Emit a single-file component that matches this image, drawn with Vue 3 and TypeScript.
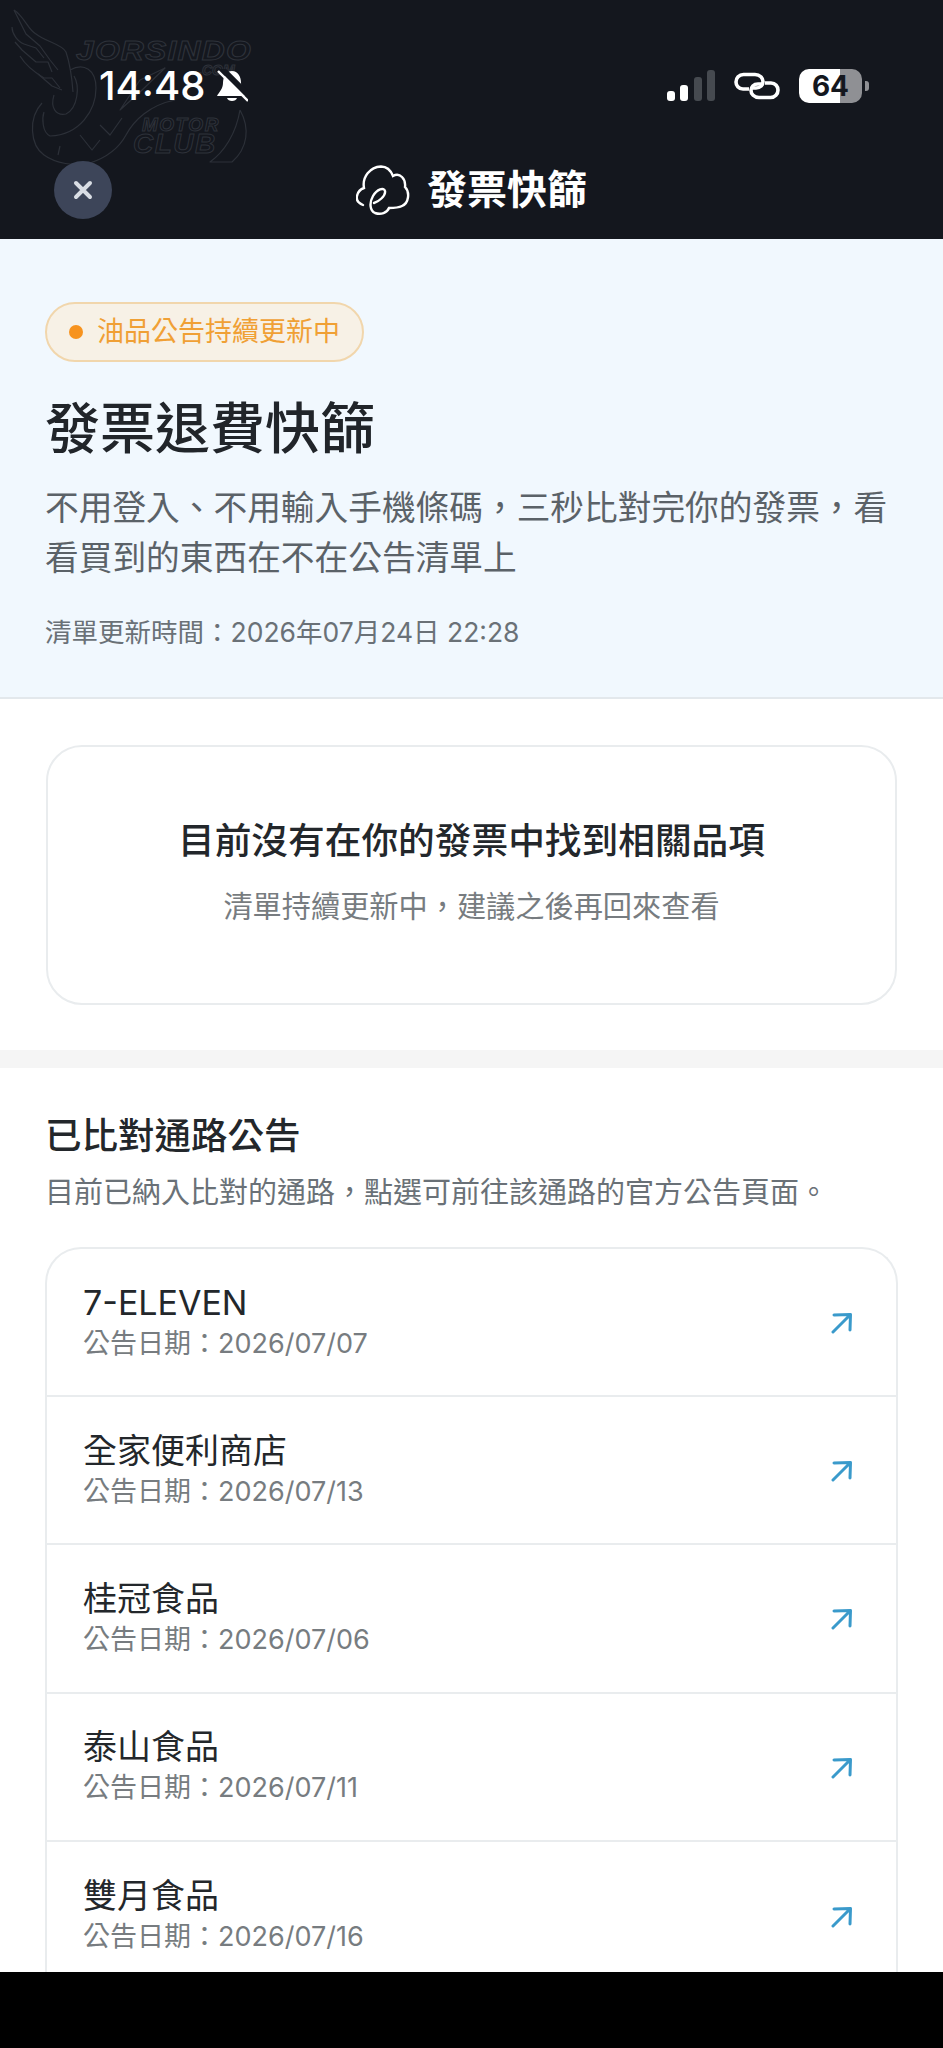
<template>
  <div class="page">
    <div class="screen">
      <header class="header">
        <div class="watermark">
          <svg class="wing" width="260" height="170" viewBox="0 0 260 170" fill="none" stroke="#2c3038" stroke-width="1.200" stroke-linejoin="round">
            <path d="M14 10 C24 16 28 30 36 34 C46 42 62 44 66 52 C70 64 72 78 73 92" />
            <path d="M14 10 L26 34 L40 46 L50 60 L58 70" />
            <path d="M12 27 C12 34 18 42 24 44 L36 48 L44 58" />
            <path d="M15 42 L22 50 L36 62 L48 62 L52 72" />
            <path d="M20 56 C26 66 34 72 44 78 L52 78 L60 88" />
            <path d="M38 74 L52 86 L62 90" />
            <path d="M70 70 C84 62 96 70 96 88 C96 110 80 135 50 136 C42 132 42 118 44 112" />
            <path d="M54 95 C50 108 56 116 66 114 C78 108 80 86 74 76" />
            <path d="M42 103 C28 118 30 145 44 155 C55 163 75 167 90 163 C105 158 118 150 126 135 C134 120 150 105 175 100" />
            <path d="M58 155 L60 146 M80 135 L92 150 L100 140 M100 125 L110 135 L122 118" />
            <path d="M165 68 L140 80 L120 110 L140 92 Z" />
            <path d="M240 110 C250 128 248 148 232 162 L210 162 C224 152 236 134 240 110" />
          </svg>
          <span class="wm-text wm-brand">JORSINDO</span>
          <span class="wm-text wm-com">.COM</span>
          <span class="wm-text wm-motor">MOTOR</span>
          <span class="wm-text wm-club">CLUB</span>
        </div>

        <div class="status-bar">
          <div class="status-left">
            <span class="time">14:48</span>
            <svg width="32" height="34" viewBox="0 0 32 34">
              <path d="M16 2 C10 2 7 8 7 14 C7 20 3 23 1 27 L31 27 C29 23 25 20 25 14 C25 8 22 2 16 2 Z" fill="#fff" />
              <path d="M11 29 C12 33 20 33 21 29 Z" fill="#fff" />
              <path d="M5 -1 L36 30" stroke="#14171e" stroke-width="6" />
              <path d="M2 2 L32 32" stroke="#fff" stroke-width="2.400" />
            </svg>
          </div>
          <div class="status-right">
            <div class="signal">
              <i class="bar on b1"></i>
              <i class="bar on b2"></i>
              <i class="bar b3"></i>
              <i class="bar b4"></i>
            </div>
            <svg width="46" height="28" viewBox="0 0 46 28" fill="none" stroke="#fff" stroke-width="3.600">
              <path d="M15 17 L9 17 C4.500 17 2 13.500 2 10 C2 6 5 2.500 9.500 2.500 L21 2.500 C26 2.500 29 6 29 9.500 C29 13 26.500 16 22 16 L19 16" />
              <path d="M31 11 L37 11 C41.500 11 44 14.500 44 18 C44 22 41 25.500 36.500 25.500 L25 25.500 C20 25.500 17 22 17 18.500 C17 15 19.500 12 24 12 L27 12" />
            </svg>
            <div class="battery">
              <div class="cell"><span>64</span></div>
              <i class="nub"></i>
            </div>
          </div>
        </div>

        <div class="nav">
          <button class="close" type="button">
            <svg width="20" height="20" viewBox="0 0 20 20" stroke="#d9dde4" stroke-width="4" stroke-linecap="round">
              <path d="M3 3 L17 17 M17 3 L3 17" />
            </svg>
          </button>
          <div class="brand">
            <svg width="54" height="50" viewBox="0 0 54 50" fill="none" stroke="#fff" stroke-width="2.400" stroke-linecap="round">
              <path d="M7 40 C2 38 0 35 1 31 C2 26 5 24 8 23 C6 12 14 2 25 1.500 C31 1.500 35 6 37 11 C44 7 50 14 49 22 C54 27 53 38 46 41 C42 43 37 43 33 43" />
              <path d="M18 38 C22 37 30 31 29 26 C28 22 21 24 17 31 C13 38 14 46 19 48 C25 50 31 48 33 43" />
            </svg>
            <span class="brand-name">發票快篩</span>
          </div>
          <div></div>
        </div>
      </header>

      <section class="hero">
        <div class="badge"><i class="dot"></i><span>油品公告持續更新中</span></div>
        <h1 class="hero-title">發票退費快篩</h1>
        <p class="hero-desc">不用登入、不用輸入手機條碼，三秒比對完你的發票，看看買到的東西在不在公告清單上</p>
        <p class="hero-time">清單更新時間：2026年07月24日 22:28</p>
      </section>

      <section class="result">
        <div class="result-card">
          <h2>目前沒有在你的發票中找到相關品項</h2>
          <p>清單持續更新中，建議之後再回來查看</p>
        </div>
      </section>

      <section class="channels">
        <h2 class="channels-title">已比對通路公告</h2>
        <p class="channels-sub">目前已納入比對的通路，點選可前往該通路的官方公告頁面。</p>
        <ul class="list">
          <li v-for="item in items" :key="item.name" class="row">
            <div class="row-text">
              <span class="row-name">{{ item.name }}</span>
              <span class="row-date">公告日期：{{ item.date }}</span>
            </div>
            <svg class="arrow" width="22" height="22" viewBox="0 0 22 22" fill="none" stroke="#3a9acb" stroke-width="3" stroke-linecap="round" stroke-linejoin="round">
              <path d="M2 20 L19 3 M3 3 L19.500 2.500 L19 18" />
            </svg>
          </li>
        </ul>
      </section>
    </div>
    <div class="black-bar"></div>
  </div>
</template>

<script setup lang="ts">
interface Channel {
  name: string;
  date: string;
}

const items: Channel[] = [
  { name: "7-ELEVEN", date: "2026/07/07" },
  { name: "全家便利商店", date: "2026/07/13" },
  { name: "桂冠食品", date: "2026/07/06" },
  { name: "泰山食品", date: "2026/07/11" },
  { name: "雙月食品", date: "2026/07/16" },
];
</script>

<style>
html,
body {
  margin: 0;
  background: #000;
}
</style>

<style scoped>
.page {
  width: 943px;
  height: 2048px;
  display: flex;
  flex-direction: column;
  overflow: hidden;
  font-family: Inter, "Noto Sans CJK TC", sans-serif;
}

.screen {
  height: 1972px;
  overflow: hidden;
  background: #fff;
}

.black-bar {
  flex: 1;
  background: #000;
}

.header {
  position: relative;
  height: 239px;
  box-sizing: border-box;
  background: #14171e;
  padding-top: 64px;
}

.watermark {
  position: absolute;
  left: 0;
  top: 0;
  width: 260px;
  height: 170px;
}

.wing {
  position: absolute;
  left: 0;
  top: 0;
}

.wm-text {
  position: absolute;
  font-family: "Liberation Sans", sans-serif;
  font-style: italic;
  font-weight: 700;
  color: transparent;
  -webkit-text-stroke: 1px #2e323a;
  line-height: 1;
  white-space: nowrap;
}

.wm-brand {
  left: 76px;
  top: 38px;
  font-size: 27px;
  letter-spacing: 1px;
  transform: scaleX(1.180);
  transform-origin: left;
}

.wm-com {
  left: 198px;
  top: 63px;
  font-size: 14px;
}

.wm-motor {
  left: 142px;
  top: 115px;
  font-size: 19px;
  letter-spacing: 1.500px;
}

.wm-club {
  left: 133px;
  top: 130px;
  font-size: 28px;
  letter-spacing: 1.500px;
}

.status-bar {
  position: relative;
  display: flex;
  justify-content: space-between;
  align-items: center;
  height: 44px;
  padding: 0 74px 0 99px;
}

.status-left {
  display: flex;
  align-items: center;
  gap: 11px;
}

.time {
  color: #fff;
  font-size: 40px;
  font-weight: 500;
  line-height: 44px;
}

.status-right {
  display: flex;
  align-items: center;
  gap: 19px;
}

.signal {
  display: flex;
  align-items: flex-end;
  gap: 5.500px;
  height: 32px;
  margin-top: -2px;
}

.bar {
  width: 8px;
  border-radius: 3px;
  background: #464a50;
}

.bar.on {
  background: #fff;
}

.b1 {
  height: 10px;
}

.b2 {
  height: 16px;
}

.b3 {
  height: 24px;
}

.b4 {
  height: 31px;
}

.battery {
  display: flex;
  align-items: center;
  gap: 3px;
}

.cell {
  width: 63px;
  height: 34px;
  border-radius: 10px;
  background: linear-gradient(90deg, #fff 65%, #8f9094 65%);
  display: flex;
  align-items: center;
  justify-content: center;
  color: #14171e;
  font-size: 28px;
  font-weight: 700;
  line-height: 34px;
}

.nub {
  width: 4px;
  height: 10px;
  border-radius: 0 3px 3px 0;
  background: #8f9094;
}

.nav {
  position: relative;
  display: grid;
  grid-template-columns: 1fr auto 1fr;
  align-items: center;
  margin-top: 53px;
  padding-left: 54px;
  padding-right: 54px;
}

.close {
  width: 58px;
  height: 58px;
  padding: 0;
  border: 0;
  border-radius: 50%;
  background: #3d4559;
  display: flex;
  align-items: center;
  justify-content: center;
}

.brand {
  display: flex;
  align-items: center;
  gap: 17px;
}

.brand-name {
  color: #fff;
  font-size: 40px;
  font-weight: 700;
  line-height: 50px;
}

.hero {
  height: 460px;
  box-sizing: border-box;
  padding: 63px 46px 0 45px;
  background: #f1f8fe;
  border-bottom: 2px solid #e3e8ec;
}

.badge {
  display: inline-flex;
  align-items: center;
  height: 60px;
  box-sizing: border-box;
  padding: 0 22px;
  border: 2px solid #f1d6ac;
  border-radius: 30px;
  background: #f7f1e6;
  color: #f0a035;
  font-size: 27px;
  gap: 14px;
}

.badge span {
  margin-top: -6px;
}

.dot {
  width: 14px;
  height: 14px;
  border-radius: 50%;
  background: #f7931e;
}

.hero-title {
  margin: 28px 0 0;
  color: #21252a;
  font-size: 55px;
  font-weight: 500;
  line-height: 76px;
}

.hero-desc {
  margin: 17px 0 0;
  color: #5b6268;
  font-size: 33.700px;
  line-height: 50px;
}

.hero-time {
  margin: 29px 0 0;
  color: #6a7177;
  font-size: 26.500px;
  line-height: 40px;
}

.result {
  height: 369px;
  box-sizing: border-box;
  padding: 46px 46px 0;
  border-bottom: 18px solid #f5f5f5;
}

.result-card {
  height: 260px;
  box-sizing: border-box;
  border: 2px solid #e9ecee;
  border-radius: 36px;
  text-align: center;
  padding-top: 69px;
}

.result-card h2 {
  margin: 0;
  color: #23272b;
  font-size: 36.700px;
  font-weight: 500;
  line-height: 50px;
}

.result-card p {
  margin: 21px 0 0;
  color: #777c80;
  font-size: 29.200px;
  line-height: 40px;
}

.channels {
  padding: 43px 45px 0;
}

.channels-title {
  margin: 0;
  color: #23272b;
  font-size: 36.500px;
  font-weight: 500;
  line-height: 50px;
}

.channels-sub {
  margin: 12px 0 0;
  color: #6a7177;
  font-size: 29px;
  line-height: 40px;
}

.list {
  list-style: none;
  margin: 34px 0 0;
  padding: 0;
  border: 2px solid #e9ecee;
  border-bottom: 0;
  border-radius: 36px 36px 0 0;
}

.row {
  height: 148.200px;
  box-sizing: border-box;
  display: flex;
  align-items: center;
  justify-content: space-between;
  padding: 0 43px 2px 36px;
  border-bottom: 2px solid #e9ecee;
}

.row:last-child {
  height: 160px;
  border-bottom: 0;
  padding-bottom: 14px;
}

.row-text {
  display: flex;
  flex-direction: column;
}

.row-name {
  color: #23272b;
  font-size: 34px;
  line-height: 44px;
}

.row-date {
  color: #777c80;
  font-size: 27px;
  line-height: 37px;
}

.arrow {
  margin-top: 4px;
}
</style>
